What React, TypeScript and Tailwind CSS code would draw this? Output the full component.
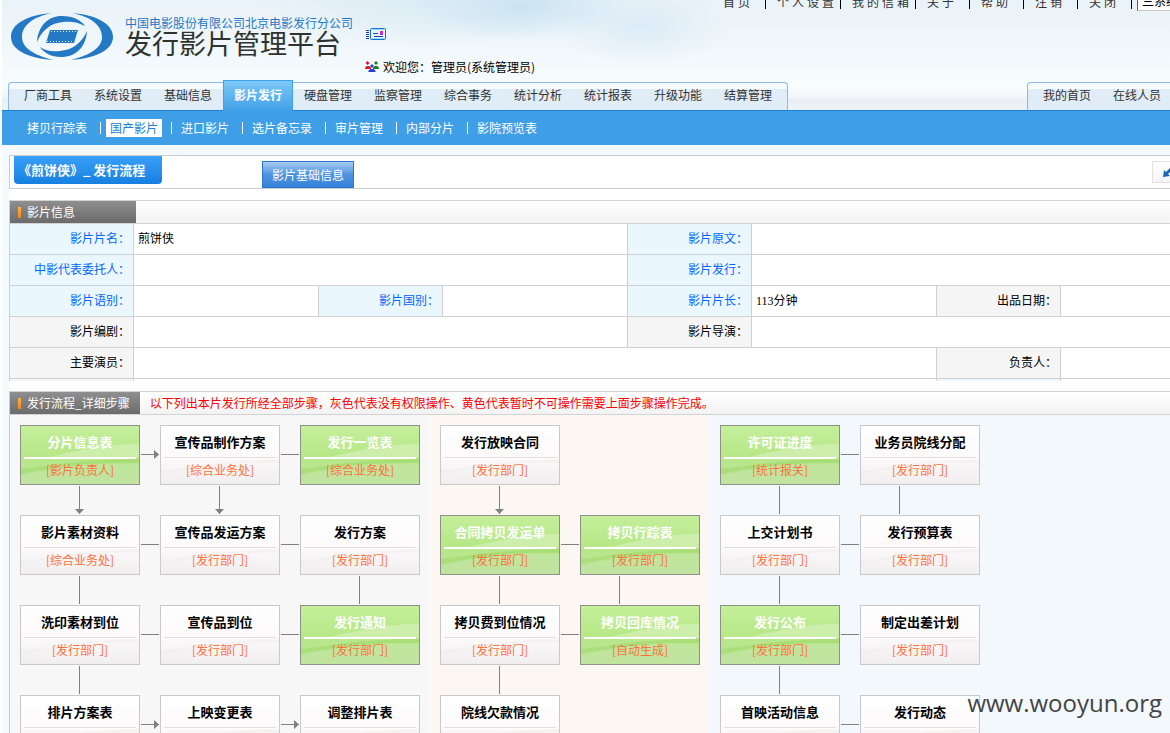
import clsx from 'clsx';

type Link = 'line' | 'arrow' | 'offset';

interface Step {
  title: string;
  owner: string;
  done?: boolean;
  right?: Link;
  down?: Link;
}

const topMenu = ['首页', '个人设置', '我的信箱', '关于', '帮助', '注销', '关闭'];

const tabs = [
  '厂商工具',
  '系统设置',
  '基础信息',
  '影片发行',
  '硬盘管理',
  '监察管理',
  '综合事务',
  '统计分析',
  '统计报表',
  '升级功能',
  '结算管理',
];

const subMenu = ['拷贝行踪表', '国产影片', '进口影片', '选片备忘录', '审片管理', '内部分片', '影院预览表'];

// Each group is one coloured lane, rows from top to bottom. null leaves the slot empty.
const groups: { className: string; grid: string; steps: (Step | null)[] }[] = [
  {
    className: 'w-[420px] shrink-0 bg-[#f7f7f7]',
    grid: 'grid-cols-[repeat(3,140px)]',
    steps: [
      { title: '分片信息表', owner: '影片负责人', done: true, right: 'arrow', down: 'arrow' },
      { title: '宣传品制作方案', owner: '综合业务处', right: 'line', down: 'arrow' },
      { title: '发行一览表', owner: '综合业务处', done: true },
      { title: '影片素材资料', owner: '综合业务处', right: 'line', down: 'line' },
      { title: '宣传品发运方案', owner: '发行部门', right: 'line' },
      { title: '发行方案', owner: '发行部门', down: 'line' },
      { title: '洗印素材到位', owner: '发行部门', right: 'line', down: 'line' },
      { title: '宣传品到位', owner: '发行部门', right: 'line' },
      { title: '发行通知', owner: '发行部门', done: true },
      { title: '排片方案表', owner: '发行部门', right: 'arrow' },
      { title: '上映变更表', owner: '发行部门', right: 'arrow' },
      { title: '调整排片表', owner: '发行部门' },
    ],
  },
  {
    className: 'w-[280px] shrink-0 bg-[#fdf7f3]',
    grid: 'grid-cols-[repeat(2,140px)]',
    steps: [
      { title: '发行放映合同', owner: '发行部门', down: 'arrow' },
      null,
      { title: '合同拷贝发运单', owner: '发行部门', done: true, right: 'line', down: 'line' },
      { title: '拷贝行踪表', owner: '发行部门', done: true, down: 'offset' },
      { title: '拷贝费到位情况', owner: '发行部门', right: 'line', down: 'line' },
      { title: '拷贝回库情况', owner: '自动生成', done: true },
      { title: '院线欠款情况', owner: '发行部门' },
      null,
    ],
  },
  {
    className: 'flex-1 bg-[#f2f8fb]',
    grid: 'grid-cols-[repeat(2,140px)]',
    steps: [
      { title: '许可证进度', owner: '统计报关', done: true, right: 'line', down: 'line' },
      { title: '业务员院线分配', owner: '发行部门', down: 'offset' },
      { title: '上交计划书', owner: '发行部门', right: 'line', down: 'line' },
      { title: '发行预算表', owner: '发行部门' },
      { title: '发行公布', owner: '发行部门', done: true, right: 'line', down: 'line' },
      { title: '制定出差计划', owner: '发行部门' },
      { title: '首映活动信息', owner: '发行部门', right: 'line' },
      { title: '发行动态', owner: '发行部门' },
    ],
  },
];

function Logo() {
  return (
    <svg className="h-[49px] w-[102px] shrink-0" viewBox="0 0 102 49" fill="#2379c4">
      <path d="M41 1C16 3 0 12 0 25c0 12 15 21 42 23C23 43 11 36 11 25 11 14 21 5 41 1Z" />
      <path d="M61 1c25 2 41 11 41 24 0 12-15 21-42 23 19-5 31-12 31-23C91 14 81 5 61 1Z" />
      <path d="M26 30C27 14 37 4 51 4c11 0 19 4 23 10-7-4-14-5-22-4C40 11 31 18 26 30Z" />
      <path d="M76 19c-1 16-11 26-26 26-10 0-17-4-21-10 6 4 12 5 20 4 12-1 22-8 27-20Z" />
      <path d="M39 18h28l-4 13H35Z" />
      <path d="M40 19.500h27M36 29.500h27" stroke="#f2f7fa" strokeWidth="1" strokeDasharray="1 2" />
    </svg>
  );
}

function MailIcon() {
  return (
    <svg className="h-3.5 w-5" viewBox="0 0 20 14" fill="none">
      <path d="M0 3.500h3M0 5.500h3M0 7.500h3M0 9.500h3M0 11.500h3" stroke="#1a35b5" />
      <rect x="4.500" y="1.500" width="15" height="11" rx="1" fill="#e8f8ff" stroke="#1673d1" />
      <path d="M5.500 2.500h13M5.500 11.500h13" stroke="#8fdcf7" />
      <path d="M7 6.500h5M8 9.500h9" stroke="#2438b8" />
      <path d="M14 4h3v4h-3Z" fill="#c32be0" />
    </svg>
  );
}

function UsersIcon() {
  return (
    <svg className="h-3.5 w-4" viewBox="0 0 16 14">
      <path d="M1.500 3l2-2 2 2-2 2ZM1 9V8l1.500-2h3L7 8v1Z" fill="#e8152f" />
      <path d="M10 3l2-2 2 2-2 2ZM9 9V8l1.500-2h3L15 8v1Z" fill="#1f7a27" />
      <path d="M6 6l2-2 2 2-2 2ZM4.500 12v-1.500L6.500 9h3l2 1.500V12Z" fill="#2a3fd0" />
    </svg>
  );
}

function Tab({ label, active }: { label: string; active?: boolean }) {
  return (
    <li className={clsx('w-[70px]', active && 'relative -mb-0.5')}>
      <a
        href="#"
        className={clsx(
          'block text-center leading-6',
          active
            ? 'h-8 border border-b-0 border-[#3fa0e8] bg-linear-to-b from-[#7cc8f8] to-[#3e9ee6] pt-0.5 font-bold text-white'
            : 'h-[27px] text-[#333]'
        )}
      >
        {label}
      </a>
    </li>
  );
}

const tabStrip =
  'flex h-7 items-end border border-b-0 border-[#8fb6e8] px-1 bg-linear-to-b from-[#f6fbff] from-[6px] to-[#e0ecf6] to-[6px]';

function Header() {
  return (
    <header className="bg-[radial-gradient(ellipse_110px_36px_at_520px_6px,#cbe3f2,transparent),radial-gradient(ellipse_90px_40px_at_640px_26px,#dcebf6,transparent),radial-gradient(ellipse_160px_50px_at_420px_0px,#dcecf5,transparent),linear-gradient(180deg,#e9f2f8,#f7fcfd_86px,#f2f5f9_98px,#e9eff4_99px,#edf3f7)]">
      <div className="flex h-[82px] items-start">
        <div className="flex w-[362px] shrink-0 pt-3 pl-[9px]">
          <Logo />
          <div className="ml-3 whitespace-nowrap">
            <p className="text-xs leading-[22px] text-[#2379c4]">中国电影股份有限公司北京电影发行分公司</p>
            <h1 className="text-[27px] leading-[18px] text-[#2f3330]">发行影片管理平台</h1>
          </div>
        </div>
        <div className="pt-[27px] whitespace-nowrap">
          <a href="#" aria-label="信箱" className="block pl-0.5">
            <MailIcon />
          </a>
          <p className="mt-4 flex items-center gap-[3px] leading-5 text-black">
            <UsersIcon />
            欢迎您：管理员(系统管理员)
          </p>
        </div>
        <nav className="-mr-[67px] ml-auto flex h-[11px] items-end overflow-hidden">
          <ul className="mb-0.5 flex text-[#333]">
            {topMenu.map((item) => (
              <li
                key={item}
                className={clsx(
                  'mr-[11px] h-3.5 border-r border-black leading-3.5 whitespace-nowrap last:mr-[5px]',
                  item.length > 2 ? 'w-16' : 'w-[43px]'
                )}
              >
                <a href="#" className="tracking-[3px]">
                  {item}
                </a>
              </li>
            ))}
          </ul>
          <select
            aria-label="系统"
            className="h-[18px] w-[100px] appearance-none border border-[#c8c8c8] border-t-[#666] border-l-[#666] bg-white pb-0.5 pl-1 text-xs leading-3.5 text-black"
          >
            <option>三系统</option>
          </select>
        </nav>
      </div>
      <nav className="flex justify-between pl-1.5">
        <ul className={clsx(tabStrip, 'rounded-t')}>
          {tabs.map((tab) => (
            <Tab key={tab} label={tab} active={tab === '影片发行'} />
          ))}
        </ul>
        <ul className={clsx(tabStrip, '-mr-[7px] rounded-tl')}>
          <Tab label="我的首页" />
          <Tab label="在线人员" />
        </ul>
      </nav>
    </header>
  );
}

function SubMenu() {
  return (
    <nav className="h-[35px] border-t border-[#1c80d4] bg-[#3e9ee6] pl-4">
      <ul className="flex pt-2">
        {subMenu.map((item) => (
          <li key={item} className="flex items-center">
            <a
              href="#"
              className={clsx(
                'mr-[9px] ml-[5px] px-1 leading-[18px]',
                item === '国产影片' ? 'bg-white text-[#1c80d4]' : 'text-white'
              )}
            >
              {item}
            </a>
            {item !== '影院预览表' && <span className="h-3 w-px bg-white" />}
          </li>
        ))}
      </ul>
    </nav>
  );
}

function SectionTitle({ title, note }: { title: string; note?: string }) {
  return (
    <div className="flex h-6 border-y border-[#d3d3d3] bg-linear-to-b from-white to-[#f3f3f3]">
      <h2 className="flex min-w-[126px] items-center gap-1.5 bg-linear-to-b from-[#8f8f8f] to-[#6b6b6b] pr-2.5 pl-2 text-white">
        <span className="h-[11px] w-[3px] bg-linear-to-b from-[#ffb347] to-[#f08519]" />
        {title}
      </h2>
      {note && <p className="pl-2.5 leading-[22px] text-[#f00]">{note}</p>}
    </div>
  );
}

function Label({ children, blue }: { children: string; blue?: boolean }) {
  return (
    <th
      className={clsx(
        'border-r border-[#d0d0d0] pr-[3px] pb-0.5 text-right font-normal',
        blue ? 'bg-[#eaf7ff] text-[#0066ff]' : 'bg-[#f5f5f5] text-black'
      )}
    >
      {children}
    </th>
  );
}

function Value({ children, span, last }: { children?: React.ReactNode; span?: number; last?: boolean }) {
  return (
    <td colSpan={span} className={clsx('border-[#d0d0d0] pb-0.5 pl-1 text-black', !last && 'border-r')}>
      {children}
    </td>
  );
}

function FilmInfo() {
  return (
    <table className="w-full table-fixed border-separate border-spacing-0 border-l border-[#d0d0d0]">
      <colgroup>
        <col className="w-[124px]" />
        <col className="w-[185px]" />
        <col className="w-[124px]" />
        <col className="w-[185px]" />
        <col className="w-[124px]" />
        <col className="w-[185px]" />
        <col className="w-[124px]" />
        <col />
      </colgroup>
      <tbody className="[&>tr]:h-[31px] [&>tr>*]:border-b">
        <tr>
          <Label blue>影片片名：</Label>
          <Value span={3}>煎饼侠</Value>
          <Label blue>影片原文：</Label>
          <Value span={3} last />
        </tr>
        <tr>
          <Label blue>中影代表委托人：</Label>
          <Value span={3} />
          <Label blue>影片发行：</Label>
          <Value span={3} last />
        </tr>
        <tr>
          <Label blue>影片语别：</Label>
          <Value />
          <Label blue>影片国别：</Label>
          <Value />
          <Label blue>影片片长：</Label>
          <Value>
            <span className="font-['Liberation_Serif','Noto_Sans_CJK_SC',serif]">113分钟</span>
          </Value>
          <Label>出品日期：</Label>
          <Value last />
        </tr>
        <tr>
          <Label>影片编剧：</Label>
          <Value span={3} />
          <Label>影片导演：</Label>
          <Value span={3} last />
        </tr>
        <tr>
          <Label>主要演员：</Label>
          <Value span={5} />
          <Label>负责人：</Label>
          <Value last />
        </tr>
      </tbody>
      <tfoot>
        <tr className="h-0.5">
          <td className="border-r border-[#d0d0d0] bg-[#f5f5f5]" />
          <td colSpan={5} className="border-r border-[#d0d0d0]" />
          <td className="border-r border-[#d0d0d0] bg-[#eaf7ff]" />
          <td />
        </tr>
      </tfoot>
    </table>
  );
}

function Swoosh({ done }: { done?: boolean }) {
  return done ? (
    <svg className="absolute inset-0 size-full" viewBox="0 0 118 58" preserveAspectRatio="none">
      <path d="M28 31C58 25 80 18 118 18v14C90 35 70 30 28 31Z" fill="#d3f0b6" opacity=".75" />
      <path d="M0 43C30 40 60 33 118 33v4C70 36 34 41 0 48Z" fill="#a5dc72" opacity=".8" />
      <path d="M0 50C30 42 70 37 118 38v20H0Z" fill="#c3e5a3" opacity=".7" />
    </svg>
  ) : (
    <svg className="absolute inset-0 size-full" viewBox="0 0 118 58" preserveAspectRatio="none">
      <path d="M0 45C30 42 60 34 118 33v4C70 36 34 41 0 49Z" fill="#ece8e8" opacity=".3" />
    </svg>
  );
}

function StepCard({ step }: { step: Step }) {
  return (
    <div className="relative h-[90px] p-2.5">
      <a
        href="#"
        className={clsx(
          'relative block h-[60px] border text-center',
          step.done
            ? 'border-[#8f9188] bg-linear-to-b from-[#c4ef9c] via-[#b7e887] to-[#bbe09a]'
            : 'border-[#c9c9c9] bg-linear-to-b from-white via-[#fcfafa] to-[#f0eeee]'
        )}
      >
        <Swoosh done={step.done} />
        <span className="relative block pt-1.5">
          <strong className={clsx('block h-[25px] text-[13px] leading-5', step.done ? 'text-white' : 'text-black')}>
            {step.title}
          </strong>
          <span
            className={clsx(
              'mx-[3px] block h-0.5',
              step.done ? 'bg-white' : 'border-b border-white bg-[#dedede]'
            )}
          />
          <span className="block pt-[3px] leading-4 text-[#ff7040]">[{step.owner}]</span>
        </span>
      </a>
      {step.right && (
        <span className="absolute top-[39px] left-[131px] h-px w-[18px] bg-[#808080]">
          {step.right === 'arrow' && (
            <svg className="absolute -top-1 right-0 h-[9px] w-[5px]" viewBox="0 0 5 9">
              <path d="M0 0l5 4.500L0 9Z" fill="#808080" />
            </svg>
          )}
        </span>
      )}
      {step.down && (
        <span
          className={clsx('absolute top-[71px] h-7 w-px bg-[#808080]', step.down === 'offset' ? 'left-[49px]' : 'left-[69px]')}
        >
          {step.down === 'arrow' && (
            <svg className="absolute bottom-0 -left-1 h-[5px] w-[9px]" viewBox="0 0 9 5">
              <path d="M0 0h9L4.500 5Z" fill="#808080" />
            </svg>
          )}
        </span>
      )}
    </div>
  );
}

export default function App() {
  return (
    <div className="relative h-screen overflow-hidden bg-white pl-0.5 font-['Noto_Sans_CJK_SC',sans-serif] text-xs">
      <Header />
      <SubMenu />
      <main className="bg-[#f5faff] pt-2.5 pl-[7px]">
        <div className="bg-white">
          {/* Title bar */}
          <div className="flex h-[34px] border border-r-0 border-[#ccc] pl-1">
            <h2 className="h-[28px] w-[148px] rounded-b bg-linear-to-b from-[#38a0f9] to-[#1680e0] pl-1 text-[13px] leading-7 font-bold whitespace-nowrap text-white">
              《煎饼侠》_ 发行流程
            </h2>
            <button
              type="button"
              className="mt-[5px] ml-[100px] h-[27px] w-[92px] border border-[#2a78cc] bg-linear-to-b from-[#a8cbef] via-[#4f93de] to-[#3583da] text-white"
            >
              影片基础信息
            </button>
            <button
              type="button"
              aria-label="返回"
              className="mt-[5px] -mr-3 ml-auto flex h-[22px] w-[30px] items-center border border-[#e2e2e2] bg-linear-to-b from-white to-[#f5f5f5] pl-2.5"
            >
              <svg className="h-[9px] w-3" viewBox="0 0 12 9" fill="#1c68b8">
                <path d="M0 9l1-7 2 2 4-4h5v3L8 3 5 6l2 2Z" />
              </svg>
            </button>
          </div>

          {/* Film info */}
          <section className="mt-[11px]">
            <div className="border-l border-[#d0d0d0]">
              <SectionTitle title="影片信息" />
            </div>
            <FilmInfo />
          </section>

          {/* Release steps */}
          <section className="mt-2.5 border-l border-[#ccc]">
            <SectionTitle
              title="发行流程_详细步骤"
              note="以下列出本片发行所经全部步骤，灰色代表没有权限操作、黄色代表暂时不可操作需要上面步骤操作完成。"
            />
            <div className="flex">
              {groups.map((group) => (
                <div key={group.className} className={group.className}>
                  <div className={clsx('grid', group.grid)}>
                    {group.steps.map((step, i) => (step ? <StepCard key={i} step={step} /> : <div key={i} />))}
                  </div>
                </div>
              ))}
            </div>
          </section>
        </div>
      </main>
      <p className="absolute right-2 bottom-3 font-['Open_Sans',sans-serif] text-2xl leading-9 text-[#444]">
        www.wooyun.org
      </p>
    </div>
  );
}
